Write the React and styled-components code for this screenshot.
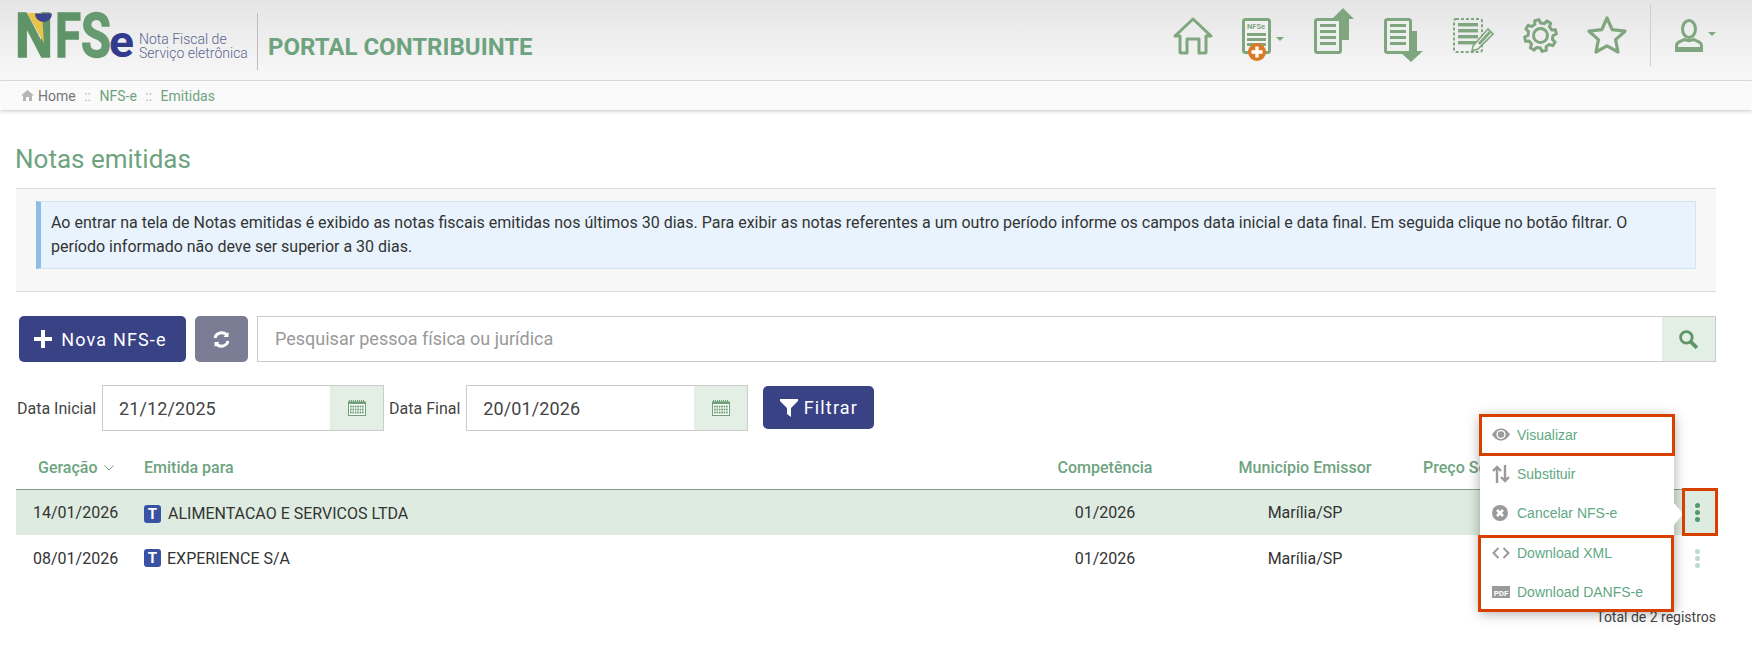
import React from 'react';
import styled, { createGlobalStyle } from 'styled-components';

const green = '#7fa67f';

const GlobalStyle = createGlobalStyle`
  html, body {
    margin: 0;
    padding: 0;
    background: #fff;
    font-family: Roboto, "Liberation Sans", sans-serif;
    color: #333;
  }
`;

const Page = styled.div`
  width: 1752px;
  height: 646px;
  overflow: hidden;
  position: relative;
`;

/* top bar */
const Header = styled.header`
  height: 80px;
  display: flex;
  align-items: flex-start;
  background: linear-gradient(#e6e5e6, #f8f8f8);
  border-bottom: 1px solid #d9d9d9;
`;

const LogoLink = styled.a`
  display: flex;
  align-items: flex-start;
  margin-left: 15px;
`;

const LogoTag = styled.div`
  margin: 32px 0 0 2px;
  width: 109px;
  font-size: 14px;
  line-height: 14px;
  font-weight: 300;
  color: #5c6590;
  white-space: nowrap;
`;

const LogoDivider = styled.div`
  width: 1px;
  height: 57px;
  margin: 13px 0 0 9px;
  background: #bdbdbd;
`;

const PortalTitle = styled.h1`
  margin: 34px 0 0 10px;
  font-size: 24px;
  line-height: 27px;
  font-weight: 700;
  color: #6ea37f;
  white-space: nowrap;
`;

const Nav = styled.nav`
  margin-left: auto;
  padding-right: 35px;
  height: 80px;
  display: flex;
  align-items: flex-start;
`;

const NavIcon = styled.svg`
  display: block;
  margin-left: ${(p) => p.$ml}px;
  margin-top: ${(p) => p.$mt}px;
  flex: none;
`;

const NavDivider = styled.div`
  width: 1px;
  height: 62px;
  margin: 4px 0 0 23px;
  background: #cfcfcf;
`;

/* breadcrumb */
const Crumbs = styled.div`
  height: 29px;
  padding-left: 21px;
  display: flex;
  align-items: center;
  gap: 8.5px;
  font-size: 14px;
  background: #fafafa;
  box-shadow: 0 2px 3px rgba(120, 130, 120, 0.3);
`;

const CrumbHome = styled.span`
  color: #75757b;
  margin-left: -4.5px;
`;

const CrumbLink = styled.span`
  color: #6ea37f;
`;

const CrumbSep = styled.span`
  color: #a9b9a9;
`;

/* main */
const Main = styled.main`
  padding: 0 36px 0 16px;
`;

const Title = styled.h2`
  margin: 34px 0 0 -1px;
  font-size: 26px;
  line-height: 30px;
  font-weight: 400;
  color: #6ea37f;
`;

const InfoPanel = styled.section`
  margin-top: 14px;
  padding: 12px 20px 22px;
  background: #f7f7f7;
  border-top: 1px solid #ddd;
  border-bottom: 1px solid #ddd;
`;

const InfoBox = styled.div`
  height: 68px;
  box-sizing: border-box;
  padding: 9px 10px;
  background: #e8f3fd;
  border: 1px solid #d6e4ef;
  border-left: 5px solid #8fbce6;
  font-size: 16px;
  line-height: 24px;
  color: #333;
`;

const SearchRow = styled.div`
  margin-top: 24px;
  padding-left: 3px;
  display: flex;
  align-items: stretch;
  height: 46px;
`;

const PrimaryButton = styled.button`
  display: flex;
  align-items: center;
  justify-content: center;
  gap: ${(p) => p.$gap}px;
  height: ${(p) => p.$h}px;
  width: ${(p) => p.$w}px;
  margin: ${(p) => p.$m || 0};
  padding: 0 ${(p) => p.$pr || 0}px 0 0;
  border: none;
  border-radius: 5px;
  background: #3a4286;
  color: #fff;
  font-family: inherit;
  font-size: 18px;
  letter-spacing: 1.15px;
`;

const RefreshButton = styled.button`
  width: 53px;
  margin: 0 9px;
  display: flex;
  align-items: center;
  justify-content: center;
  border: none;
  border-radius: 5px;
  background: #7a7d94;
  padding: 0;
`;

const Field = styled.div`
  display: flex;
  flex: ${(p) => (p.$w ? 'none' : 1)};
  width: ${(p) => (p.$w ? `${p.$w}px` : 'auto')};
  border: 1px solid #ccc;
  background: #fff;
  box-sizing: border-box;
`;

const FieldText = styled.div`
  flex: 1;
  padding-left: ${(p) => p.$pl}px;
  padding-bottom: ${(p) => (p.$muted ? 2 : 0)}px;
  display: flex;
  align-items: center;
  font-size: 18px;
  color: ${(p) => (p.$muted ? '#999' : '#444')};
  letter-spacing: ${(p) => (p.$muted ? 0 : '0.1px')};
`;

const Addon = styled.div`
  width: ${(p) => p.$w}px;
  display: flex;
  align-items: center;
  justify-content: center;
  background: #e3efe5;
`;

const DateRow = styled.div`
  margin-top: 23px;
  height: 46px;
  display: flex;
  align-items: flex-start;
`;

const DateField = styled(Field)`
  height: 46px;
`;

const DateLabel = styled.label`
  height: 46px;
  display: flex;
  align-items: center;
  font-size: 16px;
  color: #444;
  margin: ${(p) => p.$m};
`;

/* table */
const Table = styled.div`
  position: relative;
  margin-top: 14px;
  width: 1702px;
`;

const Columns = `
  display: grid;
  grid-template-columns: 128px 846px 230px 170px 292px 36px;
  align-items: center;
`;

const HeadRow = styled.div`
  ${Columns}
  height: 44px;
  border-bottom: 1px solid #7fa283;
  font-size: 16px;
  font-weight: 500;
  color: #6ea37f;
`;

const HeadCell = styled.div`
  padding-left: ${(p) => p.$pl || 0}px;
  text-align: ${(p) => p.$align || 'left'};
  white-space: nowrap;
`;

const SortCaret = styled.svg`
  margin-left: 2px;
  vertical-align: 2px;
`;

const Row = styled.div`
  ${Columns}
  height: ${(p) => (p.$active ? 45 : 46)}px;
  background: ${(p) => (p.$active ? '#deebe0' : 'transparent')};
  font-size: 16px;
  color: #333;
`;

const Cell = styled.div`
  padding-left: ${(p) => p.$pl || 0}px;
  text-align: ${(p) => p.$align || 'left'};
  white-space: nowrap;
`;

const NameCell = styled.div`
  display: flex;
  align-items: center;
  gap: ${(p) => p.$gap}px;
  padding-top: ${(p) => p.$pt}px;
`;

const TypeBadge = styled.span`
  width: 17px;
  height: 18px;
  display: flex;
  align-items: center;
  justify-content: center;
  border-radius: 3px;
  background: #3a52a4;
  color: #fff;
  font-size: 15px;
  font-weight: 700;
`;

const Kebab = styled.div`
  display: flex;
  flex-direction: column;
  align-items: center;
  gap: 2px;
  padding-right: 6px;
`;

const Dot = styled.i`
  width: 5px;
  height: 5px;
  border-radius: 50%;
  background: ${(p) => (p.$faded ? '#bcdccb' : '#4f9a6d')};
`;

const Total = styled.div`
  margin-top: 26px;
  text-align: right;
  font-size: 14px;
  line-height: 20px;
  color: #444;
  padding-right: 2px;
`;

/* action popover, sits on top of the table */
const Menu = styled.div`
  position: absolute;
  left: 1464px;
  top: -30px;
  width: 194px;
  background: #fff;
  box-shadow: 0 2px 12px rgba(0, 0, 0, 0.35);
`;

const MenuArrow = styled.div`
  position: absolute;
  right: -9px;
  top: 88px;
  width: 0;
  height: 0;
  border-top: 11px solid transparent;
  border-bottom: 11px solid transparent;
  border-left: 9px solid #fff;
`;

const MenuItem = styled.div`
  height: 39.3px;
  display: flex;
  align-items: center;
  font-family: "Liberation Sans", Arial, sans-serif;
  font-size: 14px;
  color: #5fa883;
`;

const MenuIcon = styled.span`
  width: 37px;
  padding-left: 12px;
  box-sizing: border-box;
  display: flex;
  align-items: center;
  flex: none;
`;

const Marker = styled.div`
  position: absolute;
  left: ${(p) => p.$x}px;
  top: ${(p) => p.$y}px;
  width: ${(p) => p.$w}px;
  height: ${(p) => p.$h}px;
  border: 3px solid #d84000;
  box-sizing: border-box;
  pointer-events: none;
`;

function Logo() {
  const letter = { fontFamily: 'Roboto', fontWeight: 700, fontSize: 62, lengthAdjust: 'spacingAndGlyphs', strokeWidth: 1.4 };
  return (
    <svg width="122" height="76" viewBox="0 0 122 76">
      <text x="0" y="57" fill="#5f9468" stroke="#5f9468" textLength="38" {...letter}>N</text>
      <polygon points="12,13 27,13 29,43" fill="#e8c34a" />
      <path d="M20 13.500h17a8.500 8.500 0 0 1-17 0z" fill="#3c4490" />
      <text x="40" y="57" fill="#5f9468" stroke="#5f9468" textLength="26" {...letter}>F</text>
      <text x="66" y="57" fill="#669a70" stroke="#669a70" textLength="30" {...letter}>S</text>
      <text x="94" y="57" fill="#323b8e" fontFamily="Roboto" fontWeight="700" fontSize="45" textLength="25" lengthAdjust="spacingAndGlyphs">e</text>
    </svg>
  );
}

function DocLines({ x, y, w, n, gap = 5, h = 3 }) {
  return Array.from({ length: n }, (_, i) => (
    <rect key={i} x={x} y={y + i * gap} width={w} height={h} fill={green} />
  ));
}

// eight tooth gear outline, centred on 17.5
function gearPath() {
  const pts = [];
  for (let i = 0; i < 8; i++) {
    const a = (i * Math.PI) / 4 - Math.PI / 8;
    [[-0.09, 12.5], [0.03, 16], [0.36, 16], [0.48, 12.5]].forEach(([d, r]) => {
      const t = a + d * (Math.PI / 4) * 1.05;
      pts.push(`${(17.5 + r * Math.cos(t)).toFixed(1)},${(17.5 + r * Math.sin(t)).toFixed(1)}`);
    });
  }
  return pts.join(' ');
}

const HomeIcon = () => (
  <NavIcon $ml={0} $mt={17} width="40" height="38" viewBox="0 0 40 38" fill="none" stroke={green} strokeWidth="3" strokeLinejoin="round">
    <path d="M2 19 20 2l18 17h-5v16a1 1 0 0 1-1 1h-6V22H14v14H8a1 1 0 0 1-1-1V19z" />
  </NavIcon>
);

const NewDocIcon = () => (
  <NavIcon $ml={29} $mt={18} width="43" height="44" viewBox="0 0 43 44">
    <rect x="1.500" y="1.500" width="26" height="33" rx="2" fill="#fff" fillOpacity=".35" stroke={green} strokeWidth="3" />
    <text x="5" y="11" fontFamily="Roboto" fontWeight="700" fontSize="7.500" fill={green}>NFSe</text>
    <DocLines x={5} y={15} w={19} n={3} gap={5} />
    <circle cx="15" cy="34" r="9" fill="#d97b24" />
    <path d="M15 28.500v11M9.500 34h11" stroke="#fff" strokeWidth="3.400" />
    <path d="M34 19h8l-4 4z" fill={green} />
  </NavIcon>
);

const UploadIcon = () => (
  <NavIcon $ml={29} $mt={8} width="41" height="46" viewBox="0 0 41 46">
    <path d="M29 0 40 11h-5v21H20V11h-2z" fill={green} />
    <rect x="1.500" y="11.500" width="25" height="33" rx="2" fill="#eef0ee" stroke={green} strokeWidth="3" />
    <DocLines x={6} y={16} w={16} n={4} gap={6} />
  </NavIcon>
);

const DownloadIcon = () => (
  <NavIcon $ml={29} $mt={18} width="40" height="45" viewBox="0 0 40 45">
    <path d="M20 13h13v20h6L27 44 15 33h5z" fill={green} />
    <rect x="1.500" y="1.500" width="25" height="33" rx="2" fill="#eef0ee" stroke={green} strokeWidth="3" />
    <DocLines x={6} y={6} w={16} n={4} gap={6} />
  </NavIcon>
);

const EditIcon = () => (
  <NavIcon $ml={29} $mt={18} width="41" height="36" viewBox="0 0 41 36">
    <rect x="1" y="1" width="28" height="33" rx="2" fill="none" stroke={green} strokeWidth="2" strokeDasharray="3 2" />
    <DocLines x={5} y={5} w={20} n={4} gap={6} h={3.400} />
    <path d="M20 28 35 11l5 5-15 15-6 2z" fill="#f1f1f1" stroke={green} strokeWidth="1.600" />
    <path d="M25 25 36 13l2 2-11 12z" fill={green} />
  </NavIcon>
);

const GearIcon = () => (
  <NavIcon $ml={29} $mt={18} width="35" height="35" viewBox="0 0 35 35" fill="none" stroke={green} strokeWidth="3" strokeLinejoin="round">
    <circle cx="17.500" cy="17.500" r="7" />
    <polygon points={gearPath()} />
  </NavIcon>
);

const StarIcon = () => (
  <NavIcon $ml={29} $mt={15} width="40" height="39" viewBox="0 0 40 39" fill="none" stroke={green} strokeWidth="3.200" strokeLinejoin="round">
    <path d="M20 3l5.200 11.600L38 16.200l-9.400 8.400L31 37l-11-6.200L9 37l2.400-12.400L2 16.200l12.800-1.600z" />
  </NavIcon>
);

const UserIcon = () => (
  <NavIcon $ml={24} $mt={19} width="42" height="33" viewBox="0 0 42 33">
    <ellipse cx="14" cy="10" rx="6.500" ry="8.500" fill="none" stroke={green} strokeWidth="3" />
    <path d="M1.500 31.500v-5c0-3 3-4 8-6 3 1.500 6 1.500 9 0 5 2 8 3 8 6v5z" fill="none" stroke={green} strokeWidth="3" />
    <rect x="0" y="28" width="28" height="4" fill={green} />
    <path d="M33 13h8l-4 4z" fill={green} />
  </NavIcon>
);

const CalendarIcon = () => (
  <svg width="18" height="16" viewBox="0 0 18 16">
    <rect x=".500" y="2" width="17" height="13.500" fill="#fff" stroke="#6f9f76" />
    <path d="M1 1h16" stroke="#6f9f76" strokeWidth="2" strokeDasharray="1 1" />
    <rect x="0" y="2" width="18" height="2" fill="#6f9f76" />
    {[0, 1, 2].map((r) =>
      [0, 1, 2, 3, 4, 5].map((c) => (
        <rect key={`${r}-${c}`} x={2 + c * 2.400} y={5.500 + r * 3} width="1.700" height="2" fill="#6f9f76" />
      ))
    )}
  </svg>
);

const iconGrey = '#9a9a9a';

const EyeIcon = () => (
  <svg width="18" height="13" viewBox="0 0 18 13">
    <path d="M0 6.500C3 2 6 .5 9 .5s6 1.500 9 6c-3 4.500-6 6-9 6s-6-1.500-9-6z" fill={iconGrey} />
    <circle cx="9" cy="6.500" r="4.600" fill="#fff" />
    <circle cx="9" cy="6.500" r="3.200" fill={iconGrey} />
  </svg>
);

const SwapIcon = () => (
  <svg width="18" height="18" viewBox="0 0 18 18" fill="none" stroke={iconGrey} strokeWidth="2.400">
    <path d="M5 18V2M1 6l4-4 4 4" />
    <path d="M13 0v16M9 12l4 4 4-4" />
  </svg>
);

const CancelIcon = () => (
  <svg width="16" height="16" viewBox="0 0 16 16">
    <circle cx="8" cy="8" r="8" fill={iconGrey} />
    <path d="M5 5l6 6M11 5l-6 6" stroke="#fff" strokeWidth="2.600" />
  </svg>
);

const CodeIcon = () => (
  <svg width="18" height="12" viewBox="0 0 18 12" fill="none" stroke={iconGrey} strokeWidth="2">
    <path d="M6.500 1 1.500 6l5 5M11.500 1l5 5-5 5" />
  </svg>
);

const PdfIcon = () => (
  <svg width="18" height="12" viewBox="0 0 18 12">
    <rect width="18" height="12" fill={iconGrey} />
    <text x="9" y="9.500" textAnchor="middle" fontFamily="Roboto" fontWeight="700" fontSize="8" fill="#fff">PDF</text>
  </svg>
);

const rows = [
  { date: '14/01/2026', name: 'ALIMENTACAO E SERVICOS LTDA', active: true, gap: 7, pt: 2 },
  { date: '08/01/2026', name: 'EXPERIENCE S/A', active: false, gap: 6, pt: 0 },
];

const menuItems = [
  { label: 'Visualizar', icon: <EyeIcon /> },
  { label: 'Substituir', icon: <SwapIcon /> },
  { label: 'Cancelar NFS-e', icon: <CancelIcon /> },
  { label: 'Download XML', icon: <CodeIcon /> },
  { label: 'Download DANFS-e', icon: <PdfIcon /> },
];

export default function App() {
  return (
    <Page>
      <GlobalStyle />
      <Header>
        <LogoLink>
          <Logo />
          <LogoTag>
            Nota Fiscal de
            <br />
            Serviço eletrônica
          </LogoTag>
        </LogoLink>
        <LogoDivider />
        <PortalTitle>PORTAL CONTRIBUINTE</PortalTitle>
        <Nav>
          <HomeIcon />
          <NewDocIcon />
          <UploadIcon />
          <DownloadIcon />
          <EditIcon />
          <GearIcon />
          <StarIcon />
          <NavDivider />
          <UserIcon />
        </Nav>
      </Header>
      <Crumbs>
        <svg width="13" height="11" viewBox="0 0 13 11">
          <path d="M6.500 0 0 5.500h2V11h3V7h3v4h3V5.500h2z" fill="#b5b5b5" />
        </svg>
        <CrumbHome>Home</CrumbHome>
        <CrumbSep>::</CrumbSep>
        <CrumbLink>NFS-e</CrumbLink>
        <CrumbSep>::</CrumbSep>
        <CrumbLink>Emitidas</CrumbLink>
      </Crumbs>
      <Main>
        <Title>Notas emitidas</Title>
        <InfoPanel>
          <InfoBox>
            Ao entrar na tela de Notas emitidas é exibido as notas fiscais emitidas nos últimos 30 dias. Para exibir as notas referentes a um outro período informe os campos data inicial e data final. Em seguida clique no botão filtrar. O período informado não deve ser superior a 30 dias.
          </InfoBox>
        </InfoPanel>
        <SearchRow>
          <PrimaryButton $w={167} $h={46} $gap={9} $pr={4}>
            <svg width="18" height="18" viewBox="0 0 18 18">
              <path d="M7 0h4v7h7v4h-7v7H7v-7H0V7h7z" fill="#fff" />
            </svg>
            Nova NFS-e
          </PrimaryButton>
          <RefreshButton>
            <svg width="19" height="19" viewBox="0 0 19 19" fill="none" stroke="#fff" strokeWidth="3">
              <path d="M3 8a6.800 6.800 0 0 1 12-2.500M16 11a6.800 6.800 0 0 1-12 2.500" />
              <path d="M16.500 2v5h-5zM2.500 17v-5h5z" fill="#fff" stroke="none" />
            </svg>
          </RefreshButton>
          <Field>
            <FieldText $pl={17} $muted>Pesquisar pessoa física ou jurídica</FieldText>
            <Addon $w={53}>
              <svg width="21" height="21" viewBox="0 0 20 20" fill="none" stroke="#5f9468">
                <circle cx="8" cy="8" r="5.500" strokeWidth="2.600" />
                <path d="M12.500 12.500 18 18" strokeWidth="3.600" />
              </svg>
            </Addon>
          </Field>
        </SearchRow>
        <DateRow>
          <DateLabel $m="0 6px 0 1px">Data Inicial</DateLabel>
          <DateField $w={282}>
            <FieldText $pl={16}>21/12/2025</FieldText>
            <Addon $w={53}><CalendarIcon /></Addon>
          </DateField>
          <DateLabel $m="0 6px 0 5px">Data Final</DateLabel>
          <DateField $w={282}>
            <FieldText $pl={16}>20/01/2026</FieldText>
            <Addon $w={53}><CalendarIcon /></Addon>
          </DateField>
          <PrimaryButton $w={111} $h={43} $gap={6} $m="1px 0 0 15px">
            <svg width="18" height="18" viewBox="0 0 18 18">
              <path d="M0 0h18v2l-7 7v9l-4-3V9L0 2z" fill="#fff" />
            </svg>
            Filtrar
          </PrimaryButton>
        </DateRow>
        <Table>
          <HeadRow>
            <HeadCell $pl={22}>
              Geração{' '}
              <SortCaret width="10" height="6" viewBox="0 0 10 6" fill="none" stroke="#7fa67f">
                <path d="M.5.500 5 5 9.500.500" />
              </SortCaret>
            </HeadCell>
            <HeadCell>Emitida para</HeadCell>
            <HeadCell $align="center">Competência</HeadCell>
            <HeadCell $align="center">Município Emissor</HeadCell>
            <HeadCell $pl={33}>Preço Serviço</HeadCell>
            <HeadCell />
          </HeadRow>
          {rows.map((r) => (
            <Row key={r.date} $active={r.active}>
              <Cell $pl={17}>{r.date}</Cell>
              <NameCell $gap={r.gap} $pt={r.pt}>
                <TypeBadge>T</TypeBadge>
                {r.name}
              </NameCell>
              <Cell $align="center">01/2026</Cell>
              <Cell $align="center">Marília/SP</Cell>
              <Cell />
              <Kebab>
                <Dot $faded={!r.active} />
                <Dot $faded={!r.active} />
                <Dot $faded={!r.active} />
              </Kebab>
            </Row>
          ))}
          <Total>Total de 2 registros</Total>
          <Menu>
            <MenuArrow />
            {menuItems.map((m) => (
              <MenuItem key={m.label}>
                <MenuIcon>{m.icon}</MenuIcon>
                {m.label}
              </MenuItem>
            ))}
          </Menu>
          <Marker $x={1463} $y={-31} $w={196} $h={42} />
          <Marker $x={1462} $y={90} $w={196} $h={77} />
          <Marker $x={1666} $y={43} $w={36} $h={48} />
        </Table>
      </Main>
    </Page>
  );
}
